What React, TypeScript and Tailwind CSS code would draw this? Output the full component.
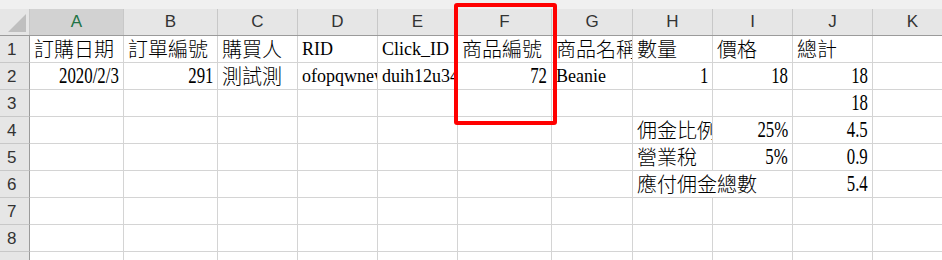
type Cell = { v?: string; num?: boolean; span?: number };

const cols = ['A', 'B', 'C', 'D', 'E', 'F', 'G', 'H', 'I', 'J', 'K'];
const widths = ['w-[94px]', 'w-[94px]', 'w-[80px]', 'w-[80px]', 'w-[80px]', 'w-[94px]', 'w-[81px]', 'w-[80px]', 'w-[80px]', 'w-[80px]', 'w-[80px]'];

const t = (v: string): Cell => ({ v });
const n = (v: string): Cell => ({ v, num: true });
const e: Cell = {};

const rows: Cell[][] = [
  [t('訂購日期'), t('訂單編號'), t('購買人'), t('RID'), t('Click_ID'), t('商品編號'), t('商品名稱'), t('數量'), t('價格'), t('總計'), e],
  [n('2020/2/3'), n('291'), t('測試測'), t('ofopqwnewqer'), t('duih12u3456'), n('72'), t('Beanie'), n('1'), n('18'), n('18'), e],
  [e, e, e, e, e, e, e, e, e, n('18'), e],
  [e, e, e, e, e, e, e, t('佣金比例'), n('25%'), n('4.5'), e],
  [e, e, e, e, e, e, e, t('營業稅'), n('5%'), n('0.9'), e],
  [e, e, e, e, e, e, e, { v: '應付佣金總數', span: 2 }, n('5.4'), e],
  [e, e, e, e, e, e, e, e, e, e, e],
  [e, e, e, e, e, e, e, e, e, e, e],
  [e, e, e, e, e, e, e, e, e, e, e],
];

const isCjk = (s: string) => /[\u3400-\u9fff]/.test(s);

function CellText({ c }: { c: Cell }) {
  if (!c.v) return null;
  if (c.num) {
    return (
      <span className="inline-block origin-right scale-x-[0.73] text-[23px] leading-[24px] pb-[1px] text-black font-['Liberation_Serif',serif]">
        {c.v}
      </span>
    );
  }
  if (isCjk(c.v)) {
    return (
      <span className="text-[20px] leading-[24px] pb-[1px] font-light text-black font-['Noto_Sans_CJK_TC',sans-serif]">
        {c.v}
      </span>
    );
  }
  return (
    <span className="text-[18px] leading-[24px] pb-[1px] text-black font-['Liberation_Serif',serif]">
      {c.v}
    </span>
  );
}

function GridRow({ index, cells }: { index: number; cells: Cell[] }) {
  let col = 0;
  return (
    <div className="flex h-[27px] shrink-0">
      <div className="w-[30px] shrink-0 border-r border-b border-r-[#9b9b9b] border-b-[#c8c8c8] bg-[#e6e6e6] pl-[7px] flex items-end pb-[1px] text-[17px] leading-[22px] text-[#333] font-['Liberation_Sans',sans-serif]">
        {index < 9 ? index : ''}
      </div>
      {cells.map((c, i) => {
        const start = col;
        col += c.span ?? 1;
        const w = c.span === 2 ? 'w-[160px]' : widths[start];
        return (
          <div
            key={i}
            className={`${w} shrink-0 border-r border-b border-[#d4d4d4] bg-white overflow-x-clip whitespace-nowrap flex items-end ${c.num ? 'justify-end pr-[4px]' : 'pl-[4px]'}`}
          >
            <CellText c={c} />
          </div>
        );
      })}
    </div>
  );
}

export default function App() {
  return (
    <div className="relative w-[942px] h-[260px] overflow-hidden bg-white">
      {/* strip above the column headers */}
      <div className="h-[9px] bg-[#f0f0f0]" />

      {/* column headers */}
      <div className="flex h-[27px] border-b border-[#9b9b9b] bg-[#e6e6e6]">
        <div className="relative w-[30px] shrink-0 border-r border-[#c8c8c8]">
          <div className="absolute right-[3px] bottom-[3px] w-0 h-0 border-l-[18px] border-l-transparent border-b-[18px] border-b-[#bfbfbf]" />
        </div>
        {cols.map((c, i) => (
          <div
            key={c}
            className={`${widths[i]} shrink-0 border-r border-[#c8c8c8] flex items-center justify-center text-[17px] font-['Liberation_Sans',sans-serif] ${i === 0 ? 'bg-[#d2d2d2] text-[#217346]' : 'text-[#333]'}`}
          >
            {c}
          </div>
        ))}
      </div>

      {rows.map((r, i) => (
        <GridRow key={i} index={i + 1} cells={r} />
      ))}

      {/* red highlight around column F */}
      <div className="absolute left-[454px] top-[3px] w-[103px] h-[122px] border-4 border-[#ff0000] rounded-[3px]" />
    </div>
  );
}
